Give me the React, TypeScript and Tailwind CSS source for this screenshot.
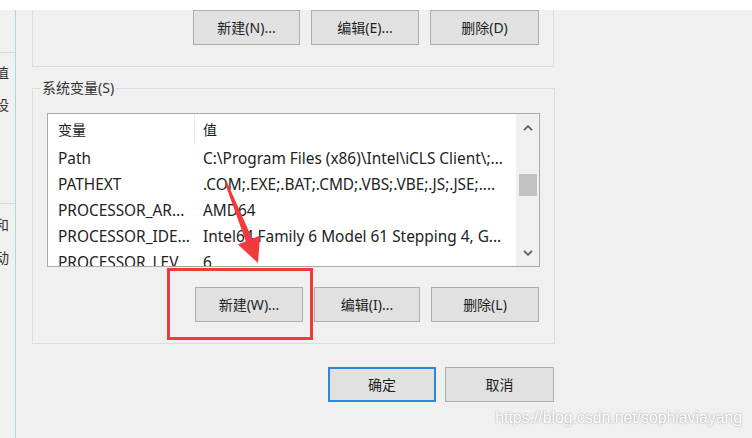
import React from 'react';

const font = "font-['Noto_Sans','Noto_Sans_CJK_SC',sans-serif]";

const rows = [
  { name: 'Path', value: 'C:\\Program Files (x86)\\Intel\\iCLS Client\\;...' },
  { name: 'PATHEXT', value: '.COM;.EXE;.BAT;.CMD;.VBS;.VBE;.JS;.JSE;....' },
  { name: 'PROCESSOR_AR...', value: 'AMD64' },
  { name: 'PROCESSOR_IDE...', value: 'Intel64 Family 6 Model 61 Stepping 4, G...' },
  { name: 'PROCESSOR_LEV...', value: '6' },
];

const Btn = ({ label, w = 'w-[107px]', active = false }: { label: string; w?: string; active?: boolean }) => (
  <div
    className={`${w} h-[35px] flex items-center justify-center bg-[#e1e1e1] text-[14px] text-[#1e1e1e] ${
      active ? 'border-2 border-[#2d86e0]' : 'border border-[#adadad]'
    }`}
  >
    {label}
  </div>
);

const Chevron = ({ up }: { up: boolean }) => (
  <svg width="10" height="6" viewBox="0 0 10 6">
    <polyline
      points={up ? '1,5.2 5,1.2 9,5.2' : '1,0.8 5,4.8 9,0.8'}
      fill="none"
      stroke="#5f5f5f"
      strokeWidth="1.8"
    />
  </svg>
);

// the parent dialog peeking out on the left, its text cut by the window edge
const LeftStrip = () => (
  <div className="w-[16px] h-full border-r border-[#a6dadd] overflow-hidden flex flex-col text-[14px] leading-[20px] text-[#333]">
    <div className="h-[42px]" />
    <div className="h-px bg-[#dadada]" />
    <div className="mt-[10px] -ml-[5px]">值</div>
    <div className="mt-[12px] -ml-[5px]">设</div>
    <div className="mt-[88px] h-px bg-[#dadada]" />
    <div className="mt-[11px] -ml-[5px]">和</div>
    <div className="mt-[13px] -ml-[5px]">动</div>
  </div>
);

const VarList = () => (
  <div className="w-[493px] h-[154px] border border-[#a9a9a9] bg-white flex">
    <div className="flex-1 overflow-hidden text-[#222]">
      <div className="h-[31px] flex items-center text-[14px]">
        <div className="w-[146px] pl-[10px]">变量</div>
        <div className="w-px h-full bg-[#e8e8e8]" />
        <div className="pl-[8px]">值</div>
      </div>
      {rows.map((r) => (
        <div key={r.name} className="h-[26px] flex items-center whitespace-nowrap text-[15.4px] pt-px">
          <div className="w-[147px] pl-[10px]">{r.name}</div>
          <div className="pl-[8px]">{r.value}</div>
        </div>
      ))}
    </div>
    <div className="w-[23px] bg-[#f0f0f0] flex flex-col items-center">
      <div className="h-[27px] flex items-center">
        <Chevron up />
      </div>
      <div className="mt-[33px] w-[18px] h-[22px] bg-[#c2c2c2]" />
      <div className="flex-1" />
      <div className="h-[26px] flex items-center">
        <Chevron up={false} />
      </div>
    </div>
  </div>
);

export default function App() {
  return (
    <div className={`relative w-[752px] h-[438px] overflow-hidden bg-[#f0f0f0] ${font}`}>
      <div className="h-[10px] bg-white" />
      <div className="flex h-[428px]">
        <LeftStrip />
        <div className="pl-[16px] flex flex-col">
          <div className="w-[522px] h-[57px] border-x border-b border-[#dcdcdc] flex justify-end gap-[11px] pr-[14px]">
            <Btn label="新建(N)..." w="w-[107px]" />
            <Btn label="编辑(E)..." w="w-[108px]" />
            <Btn label="删除(D)" w="w-[109px]" />
          </div>
          <fieldset className="mt-[12px] w-[522px] border border-[#dcdcdc] px-[14px] pb-[21px]">
            <legend className="-ml-[7px] px-[2px] text-[14px] leading-[18px] text-[#333]">系统变量(S)</legend>
            <div className="pt-[16px]">
              <VarList />
            </div>
            <div className="mt-[20px] flex justify-end gap-[11px] pr-[1px]">
              <Btn label="新建(W)..." w="w-[108px]" />
              <Btn label="编辑(I)..." w="w-[106px]" />
              <Btn label="删除(L)" w="w-[108px]" />
            </div>
          </fieldset>
          <div className="mt-[23px] w-[522px] flex justify-end gap-[9px]">
            <Btn label="确定" w="w-[108px]" active />
            <Btn label="取消" w="w-[109px]" />
          </div>
        </div>
      </div>

      <div className="absolute left-[167px] top-[268px] w-[146px] h-[72px] border-[3px] border-[#f03a3a]" />

      <svg className="absolute inset-0 pointer-events-none" width="752" height="438" viewBox="0 0 752 438">
        <polygon
          points="225,183.4 227.2,182.6 252.2,238.7 260.1,235.5 258,263 237.9,244.5 245.8,241.3"
          fill="#f2393c"
        />
      </svg>

      <div className="absolute right-[10px] bottom-[8px] font-['Liberation_Sans',Arial,sans-serif] text-[15.8px] text-white [text-shadow:0_0_2px_#8c8c8c]">
        https://blog.csdn.net/sophiaviayang
      </div>
    </div>
  );
}
